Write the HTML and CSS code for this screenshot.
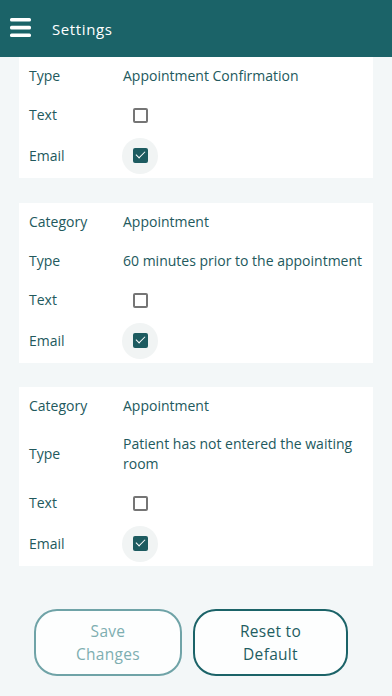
FILE: index.html
```html
<!DOCTYPE html>
<html>
<head>
  <meta name="viewport" content="width=device-width, initial-scale=1.0">
  <title>Settings</title>
  <link rel="stylesheet" href="styles.css">
</head>
<body>
  <div class="app">
    <header class="topbar">
      <svg class="menu" width="22" height="20" viewBox="0 0 22 20">
        <rect x="0" y="0" width="21" height="3.6" rx="1.5" fill="#fff"/>
        <rect x="0" y="7.8" width="21" height="3.6" rx="1.5" fill="#fff"/>
        <rect x="0" y="15.4" width="21" height="3.6" rx="1.5" fill="#fff"/>
      </svg>
      <span class="title">Settings</span>
    </header>

    <div class="content">
      <div class="card first">
        <div class="row"><span class="label">Type</span><span class="value">Appointment Confirmation</span></div>
        <div class="row box"><span class="label">Text</span><span class="value"><span class="check"></span></span></div>
        <div class="row box last"><span class="label">Email</span><span class="value"><span class="check on"></span></span></div>
      </div>

      <div class="card">
        <div class="row"><span class="label">Category</span><span class="value">Appointment</span></div>
        <div class="row"><span class="label">Type</span><span class="value">60 minutes prior to the appointment</span></div>
        <div class="row box"><span class="label">Text</span><span class="value"><span class="check"></span></span></div>
        <div class="row box last"><span class="label">Email</span><span class="value"><span class="check on"></span></span></div>
      </div>

      <div class="card">
        <div class="row"><span class="label">Category</span><span class="value">Appointment</span></div>
        <div class="row tall"><span class="label">Type</span><span class="value">Patient has not entered the waiting room</span></div>
        <div class="row box"><span class="label">Text</span><span class="value"><span class="check"></span></span></div>
        <div class="row box last"><span class="label">Email</span><span class="value"><span class="check on"></span></span></div>
      </div>

      <div class="actions">
        <button class="btn btn-save" disabled>Save<br>Changes</button>
        <button class="btn btn-reset">Reset to<br>Default</button>
      </div>
    </div>
  </div>
</body>
</html>
```

FILE: styles.css
```css
html, body {
  margin: 0;
  height: 100%;
}
body {
  font-family: "Open Sans", "Liberation Sans", sans-serif;
  background: #f3f7f8;
  color: #22595d;
}

.app {
  display: flex;
  flex-direction: column;
  height: 100%;
}

.topbar {
  height: 57px;
  flex: none;
  background: #1b6368;
  display: flex;
  align-items: center;
  padding-left: 10px;
}
.topbar .menu {
  margin-top: -2px;
}
.topbar .title {
  color: #fff;
  font-size: 15px;
  letter-spacing: 0.6px;
  margin-left: 20px;
}

.content {
  flex: 1;
  overflow: hidden;
}

.card {
  background: #fff;
  margin: 0 19px 24px;
  padding: 0 0 2px;
}
.card.first {
  margin-bottom: 25px;
}
.row {
  display: flex;
  align-items: center;
  min-height: 38px;
  font-size: 14px;
  line-height: 20px;
}
.row + .row {
  min-height: 39px;
}
.row.box {
  min-height: 40px;
}
.row.box.last {
  min-height: 41px;
}
.row.tall {
  min-height: 58px;
}
.row .label {
  width: 94px;
  flex: none;
  padding-left: 10px;
}
.row .value {
  flex: 1;
  padding-right: 8px;
}

.check {
  display: flex;
  align-items: center;
  justify-content: center;
  width: 36px;
  height: 36px;
  margin-left: -1px;
  border-radius: 50%;
  position: relative;
}
.check:before {
  content: "";
  width: 11px;
  height: 11px;
  border: 2px solid #757575;
  border-radius: 2px;
}
.check.on {
  background: #f1f4f4;
}
.check.on:before {
  width: 15px;
  height: 15px;
  border: 0;
  background: #1d5b60;
}
.check.on:after {
  content: "";
  position: absolute;
  left: 14px;
  top: 13px;
  width: 8px;
  height: 4px;
  border-left: 1.6px solid #fff;
  border-bottom: 1.6px solid #fff;
  transform: rotate(-45deg);
}

.actions {
  display: flex;
  gap: 11px;
  padding: 19px 0 0 34px;
}
.btn {
  height: 67px;
  border-radius: 23px;
  background: #fdfefe;
  font-family: inherit;
  font-size: 15.5px;
  line-height: 23px;
  letter-spacing: 0.3px;
  padding: 0;
}
.btn-save {
  width: 148px;
  border: 2px solid #6fa3a7;
  color: #7eaeb1;
}
.btn-reset {
  width: 155px;
  border: 2px solid #1b6368;
  color: #1f5d61;
}
```
